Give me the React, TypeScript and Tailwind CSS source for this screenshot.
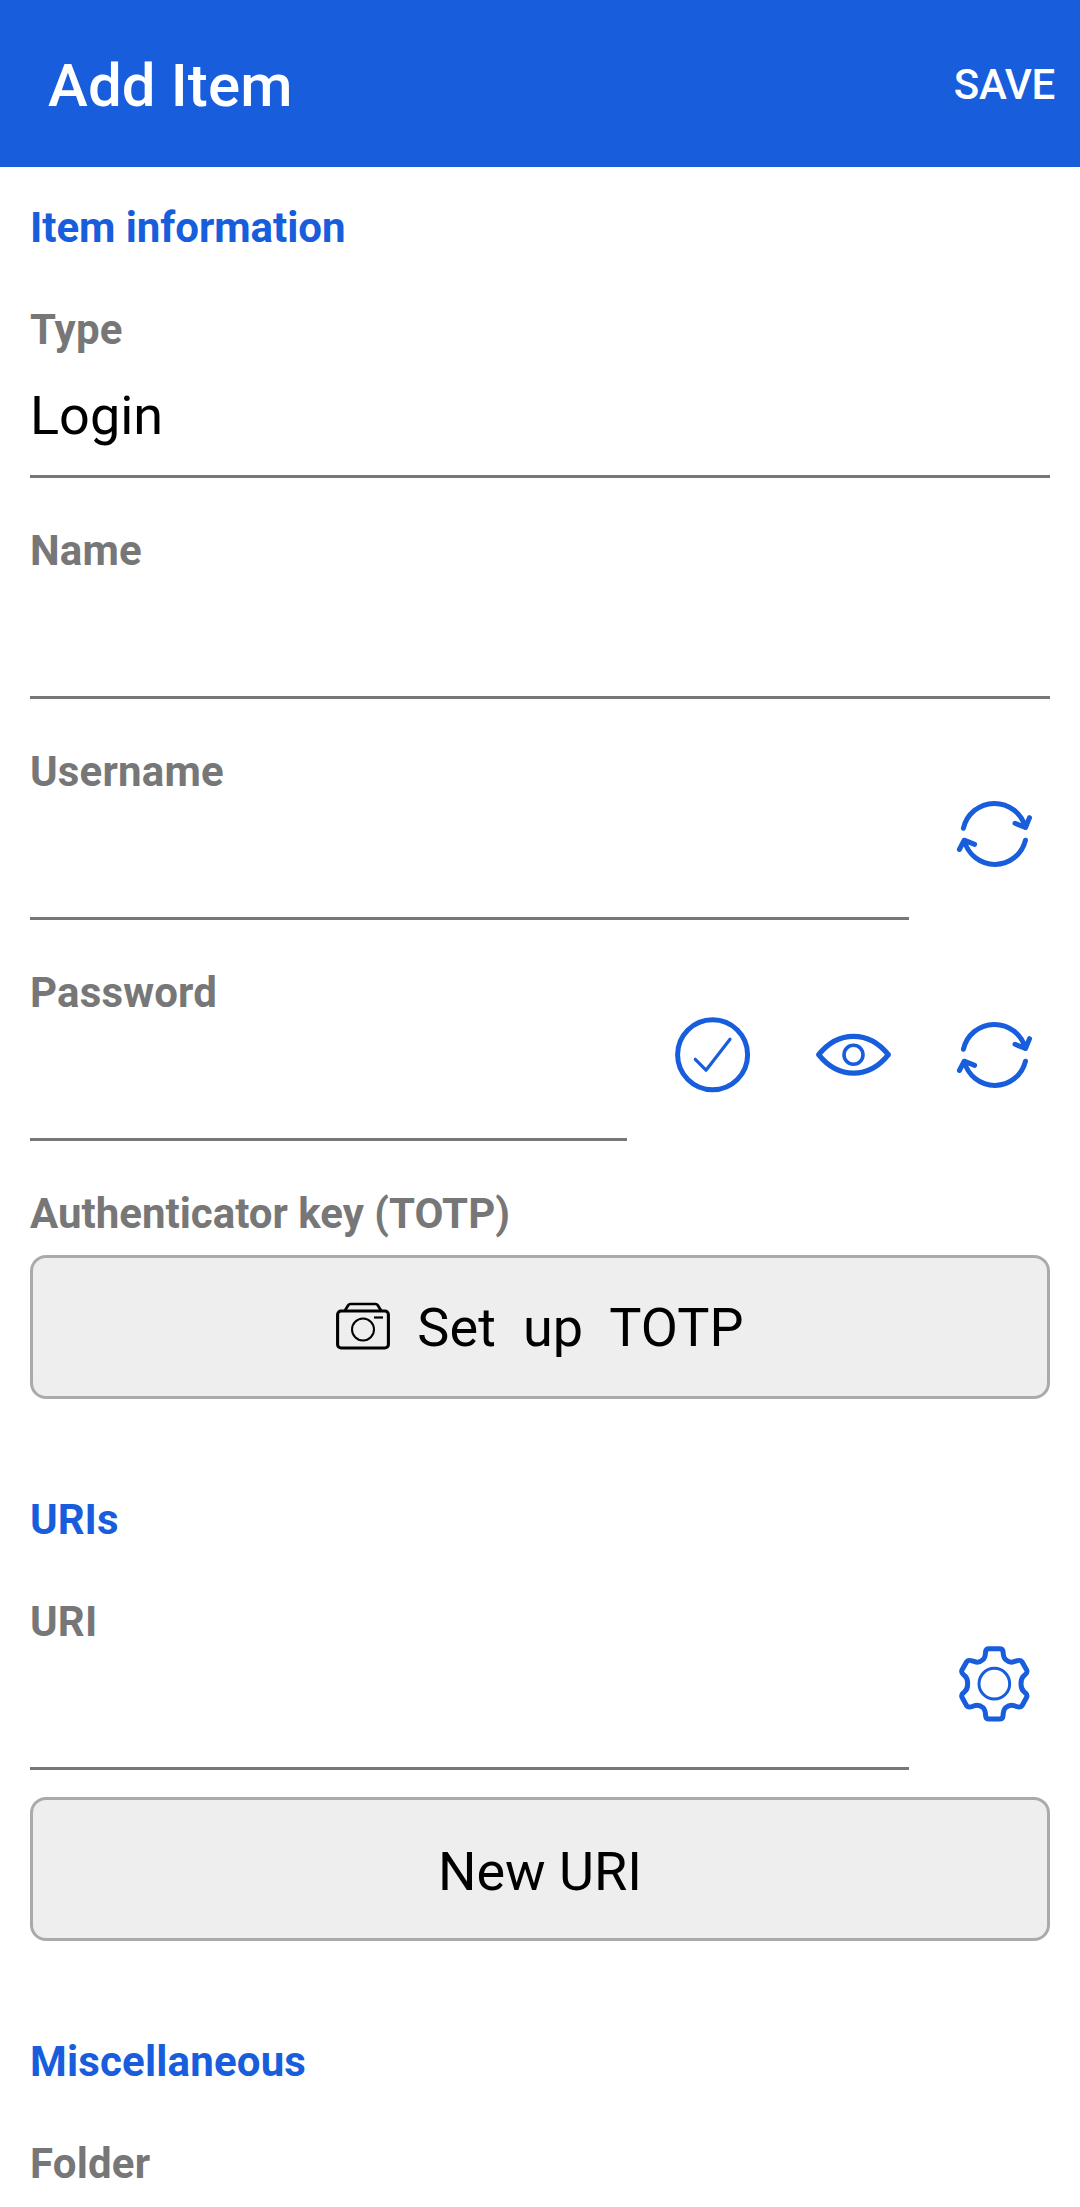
import React from "react";

const Heading = ({ children, className = "" }: { children: string; className?: string }) => (
  <h2 className={`text-[42px] leading-[50px] font-bold text-[#175ddc] ${className}`}>{children}</h2>
);

const Label = ({ children, className = "tracking-[0.18px]" }: { children: string; className?: string }) => (
  <div className={`text-[42px] leading-[50px] font-bold text-[#777777] ${className}`}>{children}</div>
);

const svgClass = "size-[110px] shrink-0 fill-none stroke-[#175ddc]";

const Refresh = () => (
  <svg viewBox="0 0 110 110" className={svgClass} strokeWidth="5" strokeLinecap="round" strokeLinejoin="round">
    <path d="M23.4 48.3A31.8 31.8 0 0 1 85.3 47.5M75 43.3L85.5 47.5L89.5 37.7" />
    <path d="M85.5 60.2A31.5 31.5 0 0 1 24.3 60.5M19.4 69.5L24.2 60.2L34.6 64.3" />
  </svg>
);

const Check = () => (
  <svg viewBox="0 0 110 110" className={svgClass} strokeWidth="5" strokeLinecap="round" strokeLinejoin="round">
    <circle cx="52.6" cy="53.7" r="35" />
    <path d="M35.3 58.3L46 69.2L70 38.3" strokeWidth="3.2" />
  </svg>
);

const Eye = () => (
  <svg viewBox="0 0 110 110" className={svgClass} strokeWidth="5.2" strokeLinejoin="round">
    <path d="M18.6 53.7C28 42 40 35.3 53.5 35.3S79 42 88.4 53.7C79 65.4 67 72.2 53.5 72.2S28 65.4 18.6 53.7Z" />
    <circle cx="53.5" cy="53.7" r="9.5" strokeWidth="3.6" />
  </svg>
);

const Gear = () => (
  <svg viewBox="0 0 330 330" className={svgClass} strokeWidth="15" strokeLinejoin="round">
    <circle cx="163" cy="161" r="46" strokeWidth="9" />
    <path d="M147 56H179Q188 56 189 64C190 75 190 83 197 89C205 96 214 98 222 95C232 92 240 87 246 95L260 120C264 129 258 131 252 137C246 142 243 150 243 161C243 172 246 180 252 185C258 191 264 193 260 202L246 227C240 235 232 230 222 227C214 224 205 226 197 233C190 239 190 247 189 258Q188 267 179 267H147Q138 267 137 258C136 247 136 239 129 233C121 226 112 224 104 227C94 230 86 235 80 227L66 202C62 193 68 191 74 185C80 180 83 172 83 161C83 150 80 142 74 137C68 131 62 129 66 120L80 95C86 87 94 92 104 95C112 98 121 96 129 89C136 83 136 75 137 64Q138 56 147 56Z" />
  </svg>
);

const Camera = () => (
  <svg viewBox="0 0 54 48" className="mr-[27px] mb-[3px] h-[48px] w-[54px] shrink-0 fill-none stroke-black" strokeWidth="3.1">
    <rect x="1.6" y="9" width="50.8" height="37" rx="3.5" />
    <path d="M9 8.5L12.2 3.2Q13 2 14.4 2H39.6Q41 2 41.8 3.2L45 8.5" strokeWidth="2.7" />
    <circle cx="27" cy="27.5" r="11" strokeWidth="2" />
    <path d="M38 15.5H47" strokeWidth="2.2" />
  </svg>
);

function Field({ label, value, last, children }: { label: string; value?: string; last?: boolean; children?: React.ReactNode }) {
  const actions = React.Children.count(children);
  return (
    <div className={`flex items-start ${last ? "h-[200px]" : "h-[221px]"}`}>
      <div className="h-[173px] flex-1 border-b-[3px] border-[#777777]">
        <Label>{label}</Label>
        <div className="mt-[29px] h-[64px] text-[54px] leading-[64px]">{value}</div>
      </div>
      {actions > 0 && (
        <div className={`mt-[33px] flex gap-[30px] ${actions > 1 ? "pl-[33px]" : "pl-[31px]"}`}>{children}</div>
      )}
    </div>
  );
}

const buttonClass =
  "flex h-[144px] w-full items-center justify-center rounded-[16px] border-[3px] border-[#aaaaaa] bg-[#eeeeee] text-[54px] leading-[64px]";

export default function App() {
  return (
    <div className="h-[2207px] overflow-hidden bg-white font-[Roboto,sans-serif] text-black">
      <header className="flex h-[167px] items-center justify-between bg-[#175ddc] pr-[25px] pl-[48px] text-white">
        <h1 className="pt-[4px] text-[60px] font-medium tracking-[0.1px]">Add Item</h1>
        <button className="pt-[2px] text-[42px] font-medium tracking-[-0.3px]">SAVE</button>
      </header>
      <main className="px-[30px] pt-[36px]">
        <Heading className="mb-[52px] tracking-[-0.05px]">Item information</Heading>
        <Field label="Type" value="Login" />
        <Field label="Name" />
        <Field label="Username"><Refresh /></Field>
        <Field label="Password"><Check /><Eye /><Refresh /></Field>
        <Label className="tracking-normal">Authenticator key (TOTP)</Label>
        <button className={`mt-[16px] ${buttonClass}`}>
          <Camera />
          <span className="pt-[2px] tracking-[0.1px] whitespace-pre">Set  up  TOTP</span>
        </button>
        <Heading className="mt-[96px] mb-[52px]">URIs</Heading>
        <Field label="URI" last><Gear /></Field>
        <button className={`pt-[5px] ${buttonClass}`}>New URI</button>
        <Heading className="mt-[96px] mb-[52px] tracking-[0.18px]">Miscellaneous</Heading>
        <Label>Folder</Label>
      </main>
    </div>
  );
}
